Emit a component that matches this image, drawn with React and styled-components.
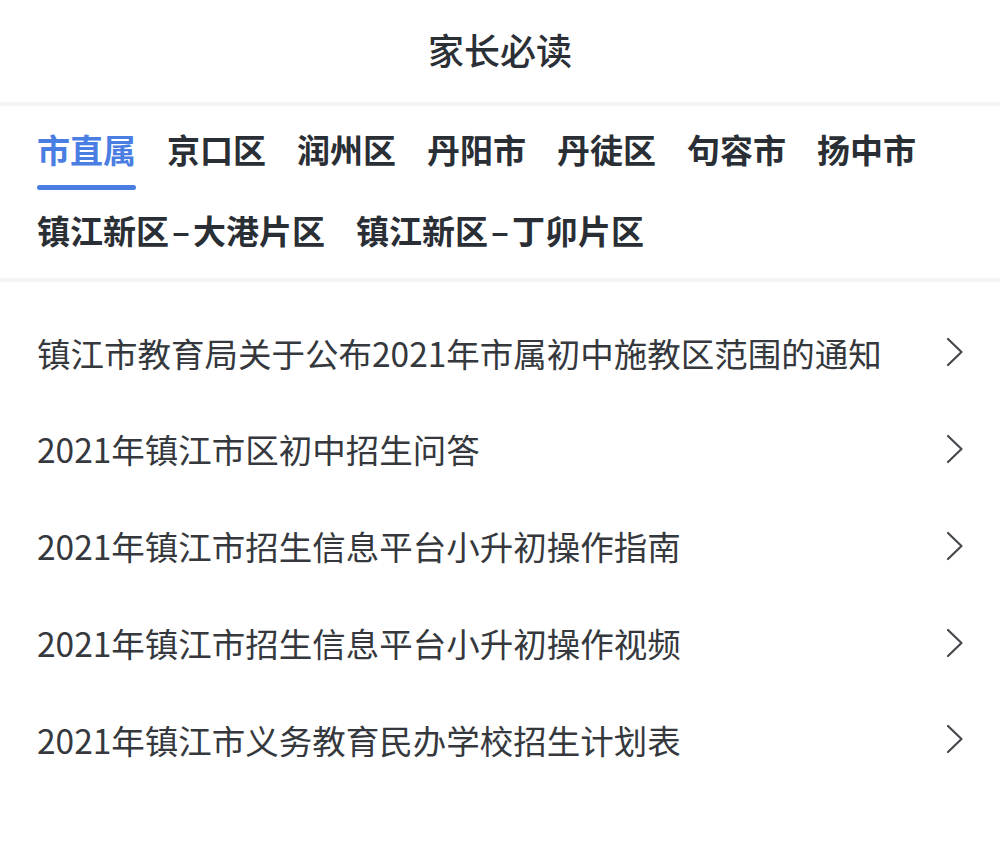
import React from "react";
import styled, { createGlobalStyle } from "styled-components";

const Global = createGlobalStyle`
  html, body { margin: 0; padding: 0; background: #fff; }
  body { font-family: "Noto Sans CJK SC", "Noto Sans", sans-serif; }
  * { box-sizing: border-box; }
`;

const Page = styled.div`
  width: 1000px;
  min-height: 848px;
  background: #fff;
`;

const Header = styled.header`
  height: 106px;
  display: flex;
  align-items: center;
  justify-content: center;
  padding-bottom: 4px;
  border-bottom: 4px solid #f2f3f5;
`;

const Title = styled.h1`
  margin: 0;
  font-size: 36px;
  line-height: 1;
  font-weight: 500;
  color: #2b2f36;
`;

const Tabs = styled.nav`
  display: flex;
  flex-wrap: wrap;
  column-gap: 31px;
  row-gap: 24px;
  padding: 27px 36px 7px 37px;
  border-bottom: 4px solid #f2f3f5;
`;

const Tab = styled.div`
  display: flex;
  flex-direction: column;
  align-items: stretch;
  gap: 19px;
  font-size: 33px;
  line-height: 1;
  font-weight: 700;
  color: ${(p) => (p.$active ? "#4a7ee3" : "#2a2e35")};
  white-space: nowrap;

  &::after {
    content: "";
    display: block;
    height: 5px;
    border-radius: 3px;
    background: ${(p) => (p.$active ? "#4a7ee3" : "transparent")};
  }
`;

const Dash = styled.span`
  padding: 0 3px;
`;

const List = styled.ul`
  list-style: none;
  margin: 0;
  padding: 22px 0 0;
`;

const Row = styled.li`
  height: 96.75px;
  display: flex;
  align-items: center;
  justify-content: space-between;
  padding: 0 36px 0 37px;
`;

const RowText = styled.span`
  font-size: 33.5px;
  line-height: 1;
  font-weight: 400;
  color: #35383d;
  white-space: nowrap;
`;

const Chevron = () => (
  <svg width="18" height="30" viewBox="0 0 18 30" fill="none">
    <path
      d="M2 2 L15.5 15 L2 28"
      stroke="#45484d"
      strokeWidth="2.2"
      strokeLinecap="round"
      strokeLinejoin="round"
    />
  </svg>
);

const tabs = [
  ["市直属"],
  ["京口区"],
  ["润州区"],
  ["丹阳市"],
  ["丹徒区"],
  ["句容市"],
  ["扬中市"],
  ["镇江新区", "大港片区"],
  ["镇江新区", "丁卯片区"],
];

const items = [
  "镇江市教育局关于公布2021年市属初中施教区范围的通知",
  "2021年镇江市区初中招生问答",
  "2021年镇江市招生信息平台小升初操作指南",
  "2021年镇江市招生信息平台小升初操作视频",
  "2021年镇江市义务教育民办学校招生计划表",
];

export default function App() {
  return (
    <Page>
      <Global />
      <Header>
        <Title>家长必读</Title>
      </Header>
      <Tabs>
        {tabs.map((t, i) => (
          <Tab key={t.join("-")} $active={i === 0}>
            <span>
              {t[0]}
              {t[1] && (
                <>
                  <Dash>–</Dash>
                  {t[1]}
                </>
              )}
            </span>
          </Tab>
        ))}
      </Tabs>
      <List>
        {items.map((t) => (
          <Row key={t}>
            <RowText>{t}</RowText>
            <Chevron />
          </Row>
        ))}
      </List>
    </Page>
  );
}
